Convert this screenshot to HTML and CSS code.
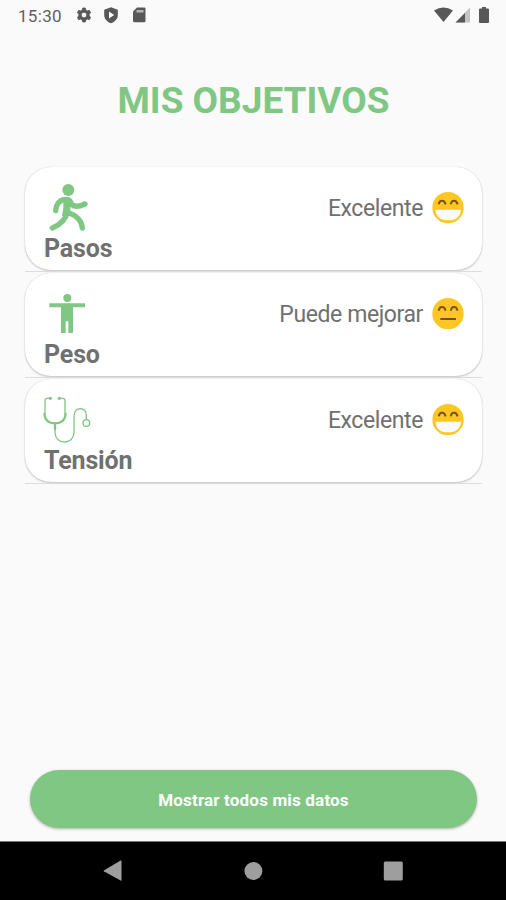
FILE: index.html
```html
<!DOCTYPE html>
<html lang="es">
<head>
<meta charset="utf-8">
<title>Mis objetivos</title>
<link rel="stylesheet" href="styles.css">
</head>
<body>
<div class="screen">
  <header class="status">
    <span class="time">15:30</span>
    <svg class="status-left" viewBox="0 0 72 18">
      <path class="gear" fill-rule="evenodd" d="M6.700 1h2.600l.5 2 1.500.900 2-.6 1.400 2.400-1.500 1.400v1.800l1.500 1.400-1.400 2.400-2-.6-1.500.9-.5 2H6.700l-.5-2-1.500-.9-2 .6-1.400-2.400 1.500-1.400V7.100L1.300 5.700l1.400-2.400 2 .6L6.200 3zM8 5.200a2.800 2.800 0 1 0 0 5.600 2.800 2.800 0 0 0 0-5.600z"/>
      <path fill-rule="evenodd" d="M35 .3l6.800 2.500V8c0 4-2.800 6.800-6.800 8.300C31 14.800 28.200 12 28.200 8V2.800zM33 4.500v7l5.200-3.500z"/>
      <path d="M61 .5h7.500q1 0 1 1V14q0 1.300-1.300 1.300h-9Q57 15.300 57 14V4.500z"/>
      <path class="slot" d="M60.500 3h7v2.500h-7z"/>
    </svg>
    <svg class="status-right" viewBox="0 0 56 18">
      <path d="M-1 3.500Q8.500-2.300 18 3.500L8.500 15z"/>
      <path class="faint" d="M35 .5v15H20.500z"/>
      <path d="M30 6v9.500h-9.500z"/>
      <path d="M47 0h4v1.500H53q1 0 1 1V15q0 1-1 1h-8q-1 0-1-1V2.500q0-1 1-1h2z"/>
    </svg>
  </header>
  <main class="content">
    <h1 class="title">MIS OBJETIVOS</h1>
    <ul class="goals">
      <li class="goal">
        <div class="card">
          <div class="metric">
            <svg class="icon" viewBox="69 69 144 144">
              <circle cx="145" cy="90" r="18"/>
              <g class="limb">
                <path d="M133 119Q108 124 107 152"/>
                <path d="M146 124Q159 149 195 132"/>
                <path d="M142 155Q136 187 97 204"/>
                <path d="M146 158Q184 172 187 204"/>
              </g>
              <path d="M118 115Q134 107 148 112Q160 119 162 132L151 141V166Q140 174 126 167Q132 144 130 126Z"/>
            </svg>
            <span class="name">Pasos</span>
          </div>
          <div class="result">
            <span>Excelente</span>
            <svg class="face" viewBox="486 96 96 96">
              <circle class="skin" cx="534" cy="143" r="47"/>
              <path class="eye" d="M506 133Q509 121 516 122Q523 121 527 133M542 133Q545 121 552 122Q559 121 563 133"/>
              <path class="teeth" d="M496 149H573Q570 181 534 181Q499 181 496 149Z"/>
            </svg>
          </div>
        </div>
      </li>
      <li class="goal">
        <div class="card">
          <div class="metric">
            <svg class="icon" viewBox="69 57 144 144">
              <circle cx="142" cy="84" r="12"/>
              <path d="M88 100H195V112H159V189H145V154H137V189H123V112H88Z"/>
            </svg>
            <span class="name">Peso</span>
          </div>
          <div class="result">
            <span>Puede mejorar</span>
            <svg class="face" viewBox="486 84 96 96">
              <circle class="skin" cx="534" cy="131" r="47"/>
              <path class="eye" d="M506 122Q509 110 516 111Q523 110 527 122M542 122Q545 110 552 111Q559 110 563 122"/>
              <path class="mouth" d="M511 147H558"/>
            </svg>
          </div>
        </div>
      </li>
      <li class="goal">
        <div class="card">
          <div class="metric">
            <svg class="icon" viewBox="69 57 144 144">
              <g class="tube">
                <path d="M90 67H81Q75 67 75 75V114M118 67H128Q135 67 135 75V114"/>
                <path class="thick" d="M73 114Q76 142 105 142Q134 142 137 114"/>
                <path class="thick" d="M105 142V159"/>
                <path d="M105 158V171Q108 198 134 198Q161 196 162 169V120Q164 98 181 98Q199 99 199 119V129"/>
                <circle cx="199" cy="141" r="10"/>
              </g>
              <circle cx="91" cy="67" r="5"/>
              <circle cx="118" cy="67" r="5"/>
            </svg>
            <span class="name">Tensión</span>
          </div>
          <div class="result">
            <span>Excelente</span>
            <svg class="face" viewBox="486 96 96 96">
              <circle class="skin" cx="534" cy="143" r="47"/>
              <path class="eye" d="M506 133Q509 121 516 122Q523 121 527 133M542 133Q545 121 552 122Q559 121 563 133"/>
              <path class="teeth" d="M496 149H573Q570 181 534 181Q499 181 496 149Z"/>
            </svg>
          </div>
        </div>
      </li>
    </ul>
    <button class="action" type="button">Mostrar todos mis datos</button>
  </main>
  <nav class="navbar">
    <svg viewBox="0 0 20 22"><path d="M18.500 1.200V21L.8 11.200q-.5-.4 0-.8L17.500.5q1-.3 1 .7z"/></svg>
    <svg viewBox="0 0 20 22"><circle cx="10.400" cy="11" r="9"/></svg>
    <svg viewBox="0 0 20 22"><rect x=".8" y="1.500" width="19" height="19" rx="1.500"/></svg>
  </nav>
</div>
</body>
</html>
```
FILE: styles.css
```css
* {
  box-sizing: border-box;
}

body {
  margin: 0;
  font-family: Roboto, "Liberation Sans", sans-serif;
  color: #707070;
  background: #fafafa;
}

.screen {
  display: flex;
  flex-direction: column;
  width: 506px;
  height: 900px;
}

.status {
  display: flex;
  height: 32px;
  padding: 7px 15px 0 18px;
  color: #606060;
}

.time {
  width: 58px;
  font-size: 17px;
  line-height: 18px;
  letter-spacing: 0.3px;
}

.status svg {
  height: 18px;
  fill: #585858;
}

.status-left {
  width: 72px;
}

.status-right {
  width: 56px;
  margin-left: auto;
  overflow: visible;
}

.status .gear {
  stroke: #585858;
  stroke-width: 0.8;
}

.status .faint {
  fill: #c4c4c4;
}

.status .slot {
  fill: #b4b4b4;
}

.content {
  display: flex;
  flex: 1;
  flex-direction: column;
  padding: 47px 24px 13px 25px;
}

.title {
  margin: 0 0 44px;
  font-size: 37px;
  font-weight: 700;
  line-height: 44px;
  text-align: center;
  color: #81c784;
}

.goals {
  margin: 0;
  padding: 0;
  list-style: none;
}

.goal {
  height: 106px;
}

.goal::after {
  display: block;
  height: 1px;
  margin-top: 1px;
  background: #dcdcdc;
  content: "";
}

.card {
  display: flex;
  justify-content: space-between;
  height: 103px;
  padding: 16px 18px 0;
  border-radius: 26px;
  background: #fff;
  box-shadow: 0 1px 2px rgba(0, 0, 0, 0.22), 0 0 1px rgba(0, 0, 0, 0.18);
}

.metric {
  display: flex;
  flex-direction: column;
}

.icon {
  width: 48px;
  height: 48px;
  fill: #81c784;
}

.limb,
.tube {
  fill: none;
  stroke: #81c784;
  stroke-width: 16;
  stroke-linecap: round;
}

.tube {
  stroke-width: 4;
}

.tube .thick {
  stroke-width: 7;
}

.name {
  padding-left: 1px;
  font-size: 25px;
  font-weight: 700;
  line-height: 36px;
  letter-spacing: -0.15px;
}

.result {
  display: flex;
  gap: 9px;
  padding-top: 9px;
  font-size: 23px;
  line-height: 34px;
  letter-spacing: -0.4px;
}

.face {
  width: 32px;
  height: 32px;
}

.skin {
  fill: #fec623;
}

.eye,
.mouth {
  fill: none;
  stroke: #7a5314;
  stroke-width: 6;
}

.teeth {
  fill: #fafafa;
}

.action {
  height: 58px;
  margin: auto 5px 0;
  padding: 2px 0 0;
  border: 0;
  border-radius: 29px;
  font-family: inherit;
  font-size: 17px;
  font-weight: 700;
  letter-spacing: 0.18px;
  color: #fff;
  background: #81c784;
  box-shadow: 0 1px 3px rgba(0, 0, 0, 0.3);
}

.navbar {
  display: flex;
  justify-content: space-between;
  height: 59px;
  padding: 18px 103px 0;
  border-top: 1px solid #777;
  background: #000;
}

.navbar svg {
  width: 20px;
  height: 22px;
  fill: #9e9e9e;
}
```
